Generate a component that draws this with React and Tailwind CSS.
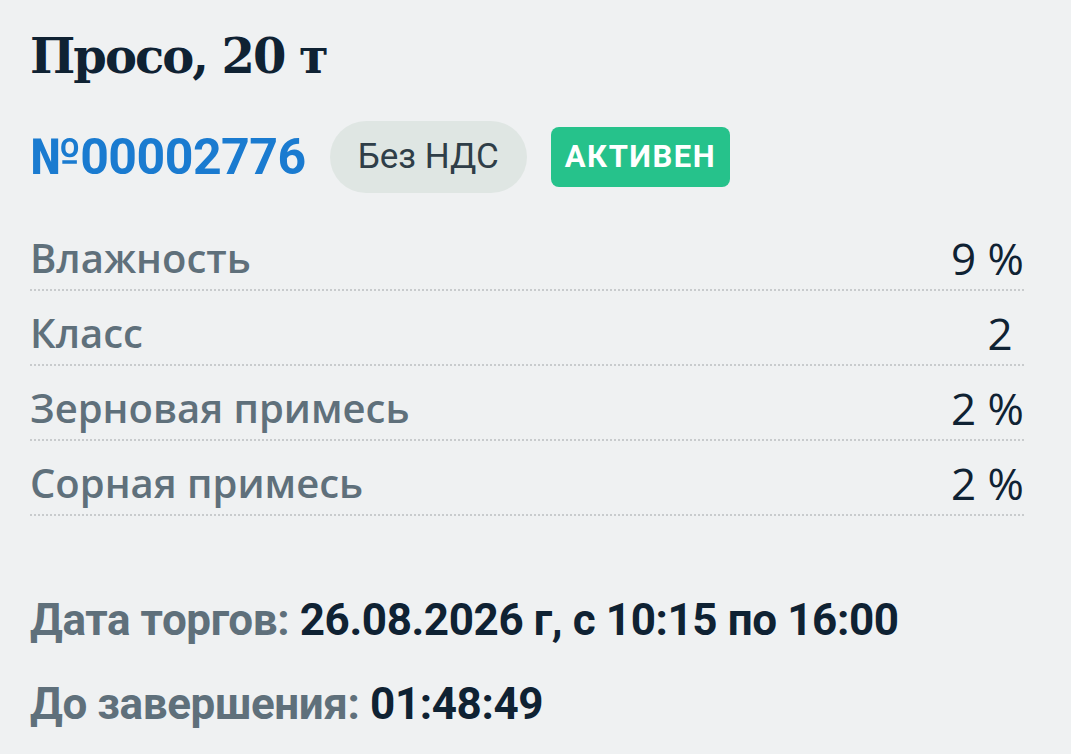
const rows = [
  { label: "Влажность", value: "9 %" },
  { label: "Класс", value: "2\u00a0" },
  { label: "Зерновая примесь", value: "2 %" },
  { label: "Сорная примесь", value: "2 %" },
];

export default function App() {
  return (
    <div className="min-h-[754px] w-full bg-[#eff1f2] px-[30px] pt-[20px] font-['Roboto',sans-serif]">
      <h1 className="font-['DejaVu_Serif',serif] text-[48px] font-bold leading-[72px] tracking-[-2px] text-[#0f2233]">
        Просо, 20 т
      </h1>

      <div className="mt-[29px] flex items-center gap-[24px]">
        <span className="text-[50px] font-bold leading-none tracking-[-0.5px] text-[#1a7bd0]">
          №00002776
        </span>
        <span className="flex h-[72px] items-center rounded-full bg-[#dfe6e3] px-[28px] text-[35px] text-[#2f3e48]">
          Без НДС
        </span>
        <span className="flex h-[60px] items-center rounded-[8px] bg-[#26c28b] px-[14px] text-[31px] font-bold tracking-[1.5px] text-white">
          АКТИВЕН
        </span>
      </div>

      <div className="mt-[23px] mr-[17px]">
        {rows.map((row) => (
          <div
            key={row.label}
            className="flex h-[75px] items-end justify-between border-b-2 border-dotted border-[#c8cbcd] pb-[3px]"
          >
            <span className="font-['Open_Sans',sans-serif] text-[40px] leading-[56px] font-semibold text-[#5f707b]">
              {row.label}
            </span>
            <span className="whitespace-pre font-['Open_Sans',sans-serif] text-[44px] leading-[56px] text-[#0f2233]">
              {row.value}
            </span>
          </div>
        ))}
      </div>

      <div className="mt-[79px] text-[44px] font-bold leading-[50px] tracking-[-0.4px]">
        <span className="text-[#5f707b]">Дата торгов: </span>
        <span className="text-[#0f2233]">26.08.2026 г, с 10:15 по 16:00</span>
      </div>
      <div className="mt-[34px] text-[44px] font-bold leading-[50px] tracking-[-0.4px]">
        <span className="text-[#5f707b]">До завершения: </span>
        <span className="text-[#0f2233]">01:48:49</span>
      </div>
    </div>
  );
}
